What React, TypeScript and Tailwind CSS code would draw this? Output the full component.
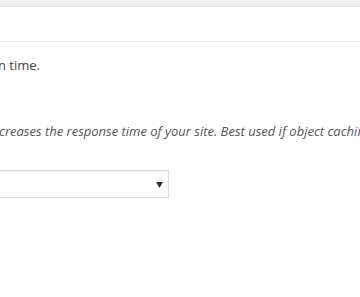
export default function App() {
  return (
    <div className="h-[297px] w-[360px] overflow-hidden bg-[#f1f1f1] font-['Open_Sans',sans-serif] text-[13px] text-[#444]">
      <div className="mt-[6px] border-y border-[#e5e5e5] bg-white">
        <div className="h-[35px] border-b border-[#eee]" />
        <div className="h-[250px]">
          <p className="mt-[13px] ml-[-2px] whitespace-nowrap leading-[20px]">n time.</p>
          <p className="mt-[46px] ml-[-1px] whitespace-nowrap italic leading-[20px] text-[#555]">
            creases the response time of your site. Best used if object caching is enabled.
          </p>
          <div className="mt-[29px] ml-[-20px] flex h-[28px] w-[189px] items-center justify-end border border-[#ddd] bg-white pr-[5px] shadow-[inset_0_1px_2px_rgba(0,0,0,0.07)]">
            <svg width="7" height="6" viewBox="0 0 7 6" className="mt-[2px]">
              <path d="M0 0 H7 L3.5 6 Z" fill="#333" />
            </svg>
          </div>
        </div>
      </div>
    </div>
  );
}
